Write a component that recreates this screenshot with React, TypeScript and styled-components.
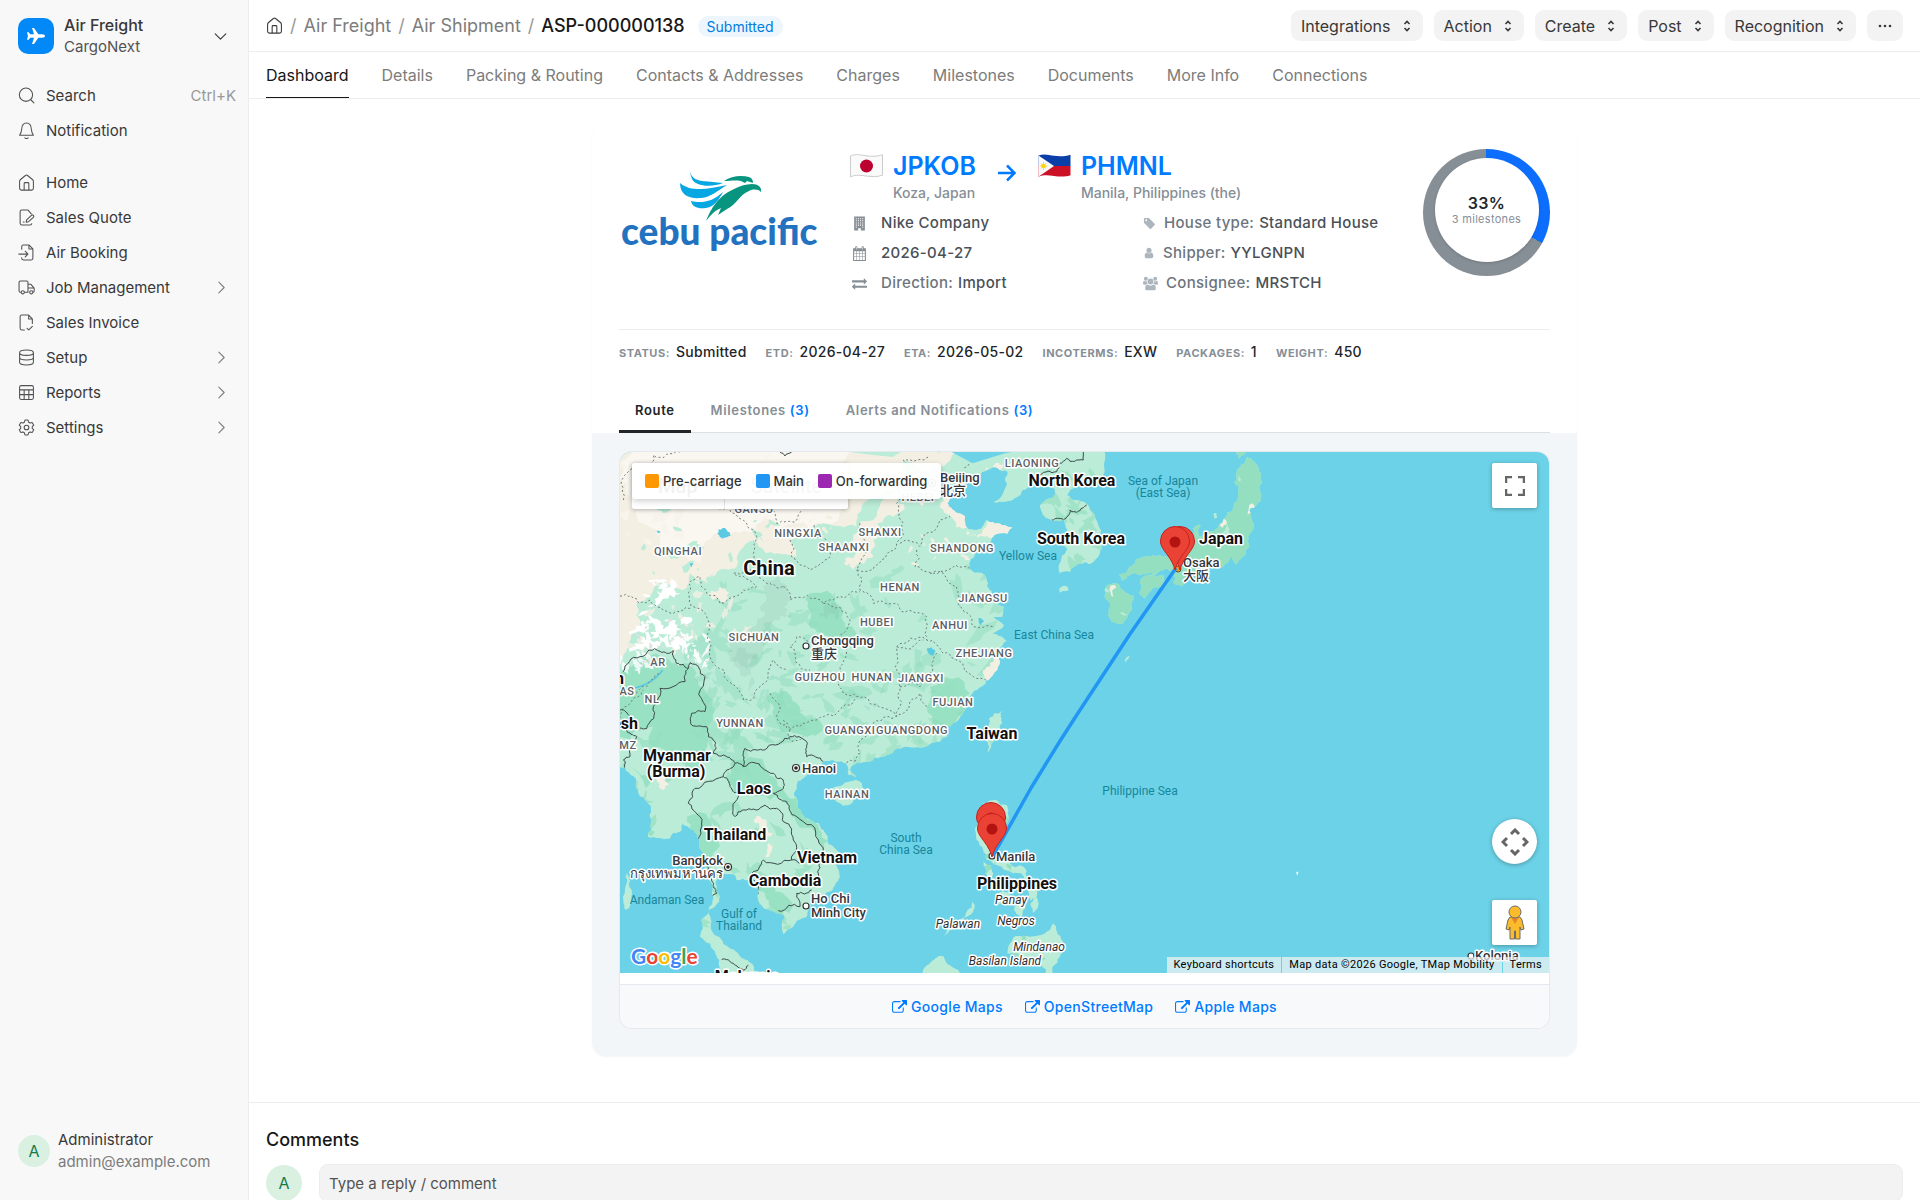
import React from "react";
import styled, { createGlobalStyle, css } from "styled-components";

/* ------------------------------------------------------------------ theme */

const INTER = `Inter, "Liberation Sans", "Noto Sans CJK SC", sans-serif`;
const ROBOTO = `Roboto, "Liberation Sans", "Noto Sans CJK SC", sans-serif`;

const GlobalStyle = createGlobalStyle`
  *, *::before, *::after { box-sizing: border-box; }
  body { margin: 0; background: #fff; color: #383838; font-family: ${INTER}; font-size: 15px; line-height: 20px; }
  button, input { font: inherit; letter-spacing: inherit; color: inherit; }
  button { border: 0; background: none; padding: 0; cursor: pointer; }
  a { color: inherit; text-decoration: none; }
  h2, p, ul, ol, dl, dd { margin: 0; padding: 0; }
  li { list-style: none; }
  svg { display: block; flex: none; }
`;

/* ------------------------------------------------------------------ shell */

const Shell = styled.div`
  display: grid;
  grid-template-columns: 249px minmax(0, 1fr);
  height: 100vh;
`;

const Sidebar = styled.aside`
  display: flex;
  flex-direction: column;
  background: #f8f8f8;
  border-right: 1px solid #ededed;
  min-height: 0;
`;

const AppSwitch = styled.button`
  display: flex;
  align-items: center;
  gap: 10px;
  padding: 14px 19px 14px 18px;
  text-align: left;
`;

const AppLogo = styled.span`
  display: grid;
  place-items: center;
  width: 36px;
  height: 36px;
  border-radius: 10px;
  background: #0289f7;
`;

const TwoLine = styled.span`
  display: flex;
  flex-direction: column;
  flex: 1;
  line-height: 22px;
`;

const Strong = styled.span`
  font-size: 16px;
  font-weight: 500;
`;

const Muted = styled.span<{ $light?: boolean }>`
  font-size: 15px;
  color: ${(p) => (p.$light ? "#7c7c7c" : "#525252")};
`;

const Nav = styled.ul`
  padding-top: 6px;
  & + & { padding-top: 17px; }
`;

const NavLink = styled.a`
  display: flex;
  align-items: center;
  gap: 11px;
  height: 35px;
  padding: 0 18px;
  color: #383838;
`;

const NavText = styled.span`
  flex: 1;
`;

const Shortcut = styled.kbd`
  font: inherit;
  color: #999;
  margin-right: -6px;
`;

const UserBox = styled.div`
  display: flex;
  align-items: center;
  gap: 8px;
  margin-top: auto;
  padding: 0 18px 27px;
`;

const Avatar = styled.span<{ $size: number }>`
  display: grid;
  place-items: center;
  flex: none;
  width: ${(p) => p.$size}px;
  height: ${(p) => p.$size}px;
  border-radius: 50%;
  background: #daf0e1;
  color: #137a4b;
  font-size: 16px;
`;

const Main = styled.main`
  min-width: 0;
  overflow-y: auto;
  scrollbar-width: none;
`;

/* ---------------------------------------------------------------- top bar */

const TopBar = styled.header`
  display: flex;
  align-items: center;
  justify-content: space-between;
  height: 52px;
  padding: 0 17px;
  border-bottom: 1px solid #ededed;
`;

const Crumbs = styled.ol`
  display: flex;
  align-items: center;
  gap: 7px;
  font-size: 18px;
  color: #7c7c7c;
`;

const Crumb = styled.li<{ $current?: boolean }>`
  display: flex;
  align-items: center;
  gap: 7px;
  color: ${(p) => (p.$current ? "#171717" : "#7c7c7c")};
  font-weight: ${(p) => (p.$current ? 500 : 400)};
  &:not(:first-child)::before {
    content: "/";
    color: #999;
    font-weight: 400;
  }
`;

const Pill = styled.span`
  margin-left: 6px;
  padding: 2px 9px;
  border-radius: 12px;
  background: #edf6fd;
  color: #007be0;
  font-size: 14px;
  line-height: 19px;
`;

const Actions = styled.div`
  display: flex;
  gap: 11px;
`;

const ActionButton = styled.button`
  display: flex;
  align-items: center;
  gap: 10px;
  height: 31px;
  padding: 0 10px;
  border-radius: 9px;
  background: #f3f3f3;
  color: #383838;
  font-size: 16px;
`;

const FormTabs = styled.nav`
  display: flex;
  gap: 33px;
  padding: 0 17px;
  border-bottom: 1px solid #ededed;
  font-size: 16px;
`;

const FormTab = styled.a<{ $active?: boolean }>`
  padding: 13px 0 12px;
  border-bottom: 1px solid ${(p) => (p.$active ? "#171717" : "transparent")};
  color: ${(p) => (p.$active ? "#171717" : "#7c7c7c")};
`;

/* ---------------------------------------------------------- shipment card */

const Card = styled.section`
  max-width: 985px;
  margin: 25px auto 46px;
  border-radius: 14px;
  background: #f3f6f9;
  overflow: hidden;
  box-shadow: 0 1px 2px rgba(0, 0, 0, 0.04);
  letter-spacing: 0.02em;
`;

const CardHead = styled.div`
  padding: 25px 27px 0;
  background: #fff;
`;

const Summary = styled.div`
  display: flex;
  align-items: flex-start;
  height: 180px;
`;

const LogoBox = styled.div`
  width: 204px;
  padding-top: 18px;
  margin-right: 27px;
`;

const Details = styled.div`
  flex: 1;
`;

const Route = styled.div`
  display: flex;
  gap: 21px;
`;

const Port = styled.div`
  display: grid;
  grid-template-columns: 33px auto;
  column-gap: 10px;
  align-items: center;
`;

const PortCode = styled.a`
  color: #007bff;
  font-size: 25px;
  font-weight: 600;
  line-height: 34px;
  letter-spacing: 0;
`;

const PortPlace = styled.span`
  grid-column: 2;
  font-size: 14px;
  font-weight: 500;
  letter-spacing: 0;
  color: #868e96;
`;

const ArrowBox = styled.span`
  padding-top: 15px;
`;

const Facts = styled.dl`
  display: grid;
  grid-template-columns: 291px 1fr;
  row-gap: 10px;
  padding-top: 10px;
`;

const Fact = styled.div<{ $tight?: boolean }>`
  display: flex;
  align-items: center;
  gap: ${(p) => (p.$tight ? 8 : 14)}px;
  padding-left: 2px;
  font-weight: 500;
  color: ${(p) => (p.$tight ? "#adb5bd" : "#868e96")};
`;

const FactName = styled.dt`
  color: #6c757d;
`;

const FactText = styled.dd`
  color: #495057;
`;

const FactPair = styled.div`
  display: flex;
  gap: 5px;
`;

const Ring = styled.div`
  display: grid;
  justify-content: center;
  align-items: start;
  width: 127px;
  height: 127px;
  padding-top: 9px;
  border-radius: 50%;
`;

const RingCore = styled.div`
  display: flex;
  flex-direction: column;
  align-items: center;
  justify-content: center;
  width: 104px;
  height: 104px;
  border-radius: 50%;
  background: #fff;
  box-shadow: 0 1px 3px rgba(0, 0, 0, 0.15);
`;

const RingValue = styled.strong`
  font-size: 16px;
  font-weight: 600;
  line-height: 18px;
  color: #212529;
`;

const RingNote = styled.span`
  font-size: 11px;
  line-height: 14px;
  color: #868e96;
`;

const Meta = styled.dl`
  display: flex;
  gap: 19px;
  padding: 12px 0 30px;
  border-top: 1px solid #ededed;
`;

const MetaItem = styled.div`
  display: flex;
  align-items: baseline;
  gap: 6px;
`;

const MetaName = styled.dt`
  font-size: 11px;
  font-weight: 700;
  letter-spacing: 0.05em;
  text-transform: uppercase;
  color: #868e96;
`;

const MetaValue = styled.dd`
  font-size: 14px;
  font-weight: 500;
  color: #212529;
`;

const CardTabs = styled.div`
  display: flex;
  gap: 4px;
  border-bottom: 1px solid #d8e0e6;
`;

const CardTab = styled.button<{ $active?: boolean }>`
  padding: 7px 16px 10px;
  margin-bottom: -1px;
  border-bottom: 3px solid ${(p) => (p.$active ? "#212529" : "transparent")};
  color: ${(p) => (p.$active ? "#212529" : "#868e96")};
  font-size: 13px;
  font-weight: 600;
  letter-spacing: 0.05em;
`;

const Count = styled.span`
  color: #007bff;
`;

const CardBody = styled.div`
  padding: 19px 28px 28px;
`;

const MapCard = styled.div`
  border-radius: 12px;
  overflow: hidden;
  background: #fff;
  box-shadow: 0 0 0 1px #e3e9ee;
`;

const MapLinks = styled.div`
  display: flex;
  justify-content: center;
  gap: 22px;
  margin-top: 11px;
  padding: 12px 0 11px;
  border-top: 1px solid #e3e9ee;
  background: #f8f9fb;
`;

const MapLink = styled.a`
  display: flex;
  align-items: center;
  gap: 4px;
  color: #007bff;
  font-size: 14px;
  font-weight: 500;
`;

/* -------------------------------------------------------------------- map */

const MapFrame = styled.div`
  position: relative;
  height: 521px;
  font-family: ${ROBOTO};
`;

const MapSvg = styled.svg`
  width: 100%;
  height: 100%;
  background: #6cd2e7;
`;

const halo = css`
  paint-order: stroke;
  stroke: #fff;
  stroke-width: 3px;
  stroke-linejoin: round;
`;

type LabelKind = "country" | "big" | "province" | "city" | "island" | "sea";

const MapLabel = styled.text<{ $kind: LabelKind; $anchor?: string }>`
  font-family: ${ROBOTO};
  letter-spacing: 0;
  text-anchor: ${(p) => p.$anchor ?? "middle"};
  ${(p) =>
    ({
      country: css`font-size: 16px; font-weight: 700; fill: #111; ${halo}`,
      big: css`font-size: 20px; font-weight: 700; fill: #111; ${halo}`,
      province: css`font-size: 11px; font-weight: 500; fill: #5a5f66; letter-spacing: 0.05em; ${halo}`,
      city: css`font-size: 13px; font-weight: 500; fill: #33373b; ${halo}`,
      island: css`font-size: 12px; font-style: italic; fill: #2b2f33; ${halo}`,
      sea: css`font-size: 12px; fill: #17869b;`,
    })[p.$kind]}
`;

const GoogleMark = styled.text`
  font-family: Lato, ${ROBOTO};
  font-size: 21px;
  font-weight: 700;
  letter-spacing: 0;
  ${halo}
`;

const MapTypes = styled.div`
  position: absolute;
  left: 12px;
  top: 11px;
  display: flex;
  height: 46px;
  border-radius: 2px;
  background: #fff;
  box-shadow: 0 1px 4px rgba(0, 0, 0, 0.3);
`;

const MapType = styled.button<{ $on?: boolean }>`
  padding: 0 26px;
  font-size: 20px;
  font-weight: ${(p) => (p.$on ? 500 : 400)};
  color: ${(p) => (p.$on ? "#000" : "#565656")};
  letter-spacing: 0;
  & + & { border-left: 1px solid #e6e6e6; }
`;

const Legend = styled.ul`
  position: absolute;
  left: 12px;
  top: 11px;
  display: flex;
  align-items: center;
  gap: 14px;
  height: 36px;
  padding: 0 14px 0 13px;
  border-radius: 4px;
  background: rgba(255, 255, 255, 0.95);
  box-shadow: 0 2px 6px rgba(0, 0, 0, 0.2);
  font-family: ${INTER};
  font-size: 13px;
  font-weight: 500;
  letter-spacing: 0;
  color: #333;
`;

const LegendItem = styled.li<{ $color: string }>`
  display: flex;
  align-items: center;
  gap: 4px;
  &::before {
    content: "";
    width: 14px;
    height: 14px;
    border-radius: 2px;
    background: ${(p) => p.$color};
  }
`;

const MapControl = styled.button<{ $round?: boolean }>`
  display: grid;
  place-items: center;
  width: 45px;
  height: 45px;
  border-radius: ${(p) => (p.$round ? "50%" : "2px")};
  background: #fff;
  box-shadow: 0 1px 4px rgba(0, 0, 0, 0.3);
`;

const MapControls = styled.div`
  position: absolute;
  top: 11px;
  right: 12px;
  bottom: 28px;
  display: flex;
  flex-direction: column;
  gap: 36px;
  & > :first-child { margin-bottom: auto; }
`;

const Attribution = styled.div`
  position: absolute;
  right: 0;
  bottom: 0;
  display: flex;
  gap: 1px;
  font-size: 11px;
  line-height: 16px;
  color: #000;
`;

const Credit = styled.a`
  padding: 0 7px;
  background: rgba(245, 245, 245, 0.7);
`;

const VIEW_BOX = "1 0 929 521";

/* Geography is digitised on a 3x grid; this group transform brings it to map units. */
const GRID = "translate(-9 -12) scale(0.33333)";

type Pt = [number, number];

function rng(seed: number) {
  let s = seed;
  return () => {
    s = (s * 16807) % 2147483647;
    return s / 2147483647;
  };
}

const parse = (src: string): Pt[] =>
  src
    .trim()
    .split(/\s+/)
    .map((p) => p.split(",").map(Number) as Pt);

/* Midpoint displacement: turns a coarse outline into a natural-looking one. */
function rough(src: string, closed = true, amp = 0.16, seed = 7): string {
  const r = rng(seed * 131 + 17);
  let pts = parse(src);
  for (let k = 0; k < 3; k++) {
    const out: Pt[] = [];
    const n = pts.length;
    for (let i = 0; i < (closed ? n : n - 1); i++) {
      const a = pts[i];
      const b = pts[(i + 1) % n];
      const d = (r() - 0.5) * 2 * amp;
      const far = Math.hypot(b[0] - a[0], b[1] - a[1]) > 8;
      out.push(a);
      if (far) out.push([(a[0] + b[0]) / 2 - (b[1] - a[1]) * d, (a[1] + b[1]) / 2 + (b[0] - a[0]) * d]);
    }
    if (!closed) out.push(pts[n - 1]);
    pts = out;
  }
  return "M" + pts.map((p) => `${Math.round(p[0])} ${Math.round(p[1])}`).join("L") + (closed ? "Z" : "");
}

function patches(count: number, box: [number, number, number, number], size: number, seed: number): string {
  const r = rng(seed);
  let d = "";
  for (let i = 0; i < count; i++) {
    const cx = box[0] + r() * (box[2] - box[0]);
    const cy = box[1] + r() * (box[3] - box[1]);
    const s = size * (0.3 + r());
    const tilt = r() * 3;
    const pts: string[] = [];
    for (let k = 0; k < 11; k++) {
      const a = (k / 11) * Math.PI * 2;
      const q = s * (0.35 + r() * 0.9);
      const x = Math.cos(a) * q * 1.5;
      const y = Math.sin(a) * q * 0.6;
      pts.push(`${Math.round(cx + x * Math.cos(tilt) - y * Math.sin(tilt))} ${Math.round(cy + x * Math.sin(tilt) + y * Math.cos(tilt))}`);
    }
    d += "M" + pts.join("L") + "Z";
  }
  return d;
}

const MAINLAND =
  "-30,-20 700,-40 1485,0 1485,60 1478,120 1440,132 1400,140 1372,165 1385,178 1420,185 1440,210 1462,245 1472,300 1468,345 1440,372 1405,372 1380,395 1348,402 1352,365 1372,330 1355,305 1372,270 1362,238 1320,238 1295,215 1290,195 1330,172 1335,148 1310,138 1262,142 1220,172 1150,186 1188,140 1192,95 1150,82 1118,95 1095,132 1030,150 1012,190 1040,218 1065,228 1070,262 1100,270 1128,240 1165,250 1208,262 1192,282 1150,290 1120,322 1082,358 1076,382 1120,402 1132,440 1150,480 1182,502 1178,530 1150,532 1182,556 1148,582 1190,602 1168,630 1170,662 1128,724 1092,752 1078,792 1050,832 1008,862 1012,890 985,905 900,922 830,946 760,966 728,976 720,990 738,1012 715,1004 708,970 680,965 640,966 590,1005 562,1025 552,1060 562,1100 602,1140 640,1170 690,1240 690,1312 668,1350 602,1390 590,1430 550,1460 520,1482 524,1430 500,1420 450,1392 446,1352 420,1322 380,1320 368,1302 345,1302 320,1320 330,1370 294,1412 302,1462 340,1512 380,1536 412,1560 450,1620 352,1620 328,1560 300,1510 270,1490 274,1440 298,1400 308,1350 290,1300 272,1230 268,1200 250,1170 218,1150 214,1172 178,1196 114,1190 124,1140 104,1080 84,1050 58,1000 20,976 -400,976 -400,-20";

const ISLANDS = [
  "1175,812 1152,820 1136,858 1124,900 1136,945 1150,905 1176,850",
  "722,1024 756,1030 750,1066 715,1096 680,1086 664,1052",
  "1910,52 1930,64 1956,125 1954,168 1918,210 1914,290 1908,340 1880,372 1865,345 1850,370 1820,385 1760,386 1730,420 1715,440 1690,425 1685,392 1660,390 1610,402 1570,400 1535,422 1528,402 1600,350 1650,346 1690,346 1740,330 1750,266 1772,255 1765,290 1810,275 1840,238 1870,205 1886,140 1872,126 1890,80",
  "1878,20 1908,20 1904,42 1886,56",
  "1590,430 1620,404 1660,405 1666,430 1625,450 1606,476 1588,460",
  "1484,450 1510,430 1540,450 1568,465 1565,500 1540,548 1505,545 1500,500 1486,475",
  "1120,1090 1190,1096 1196,1130 1182,1180 1162,1240 1200,1270 1240,1280 1252,1312 1210,1300 1150,1272 1130,1260 1100,1200 1105,1130",
  "1120,1262 1150,1300 1142,1322 1126,1300",
  "1240,1300 1280,1370 1262,1384 1246,1344",
  "1160,1362 1200,1356 1190,1392 1162,1390",
  "1238,1376 1232,1432 1212,1410 1216,1386",
  "1270,1362 1284,1400 1270,1420 1262,1390",
  "1088,1384 1086,1420 1046,1450 1000,1492 1036,1440 1070,1416",
  "1200,1510 1260,1490 1330,1450 1352,1490 1350,1550 1318,1620 1290,1560 1240,1550 1192,1540",
  "940,1620 970,1560 1000,1548 1012,1572 1066,1620",
  "1348,446 1372,440 1376,450 1350,458",
  "1544,660 1560,650 1548,668",
  "1810,222 1820,220 1822,232 1814,236",
  "50,1300 56,1330 46,1410 40,1380",
].map((s, i) => rough(s, true, 0.2, i + 3));

const JAPAN = ISLANDS.slice(2, 6).join("");
const LAND = rough(MAINLAND) + ISLANDS.join("");

const ARID = rough(
  "-300,-100 500,-60 1060,20 1000,80 940,92 880,64 850,150 760,190 740,260 640,250 600,280 540,300 560,350 470,340 430,300 380,380 330,390 290,430 240,400 216,450 150,420 120,470 80,490 90,560 30,660 -300,660",
  true,
  0.2,
  11,
);
const PALE = rough("70,36 720,36 640,120 700,200 560,250 460,230 360,280 250,330 150,300 60,200", true, 0.3, 5);
const CREAM_SPOTS = [
  "860,150 850,230 790,300 790,350 730,390 700,370 740,340 730,300 790,240",
  "1040,150 1070,220 1090,262 1060,268 1000,216 990,200",
  "1130,240 1208,262 1150,290 1100,290",
  "330,440 350,490 310,480 295,460",
  "430,1140 470,1150 490,1180 440,1200",
  "140,980 165,1010 160,1050 130,1000",
  "480,1210 486,1230 466,1250",
  "1170,655 1130,722 1118,700 1140,670",
  "1150,86 1180,70 1150,150 1110,140",
  "1508,436 1518,440 1510,470 1498,450",
  "1845,238 1840,262 1828,250",
  "1925,190 1930,210 1914,226",
].map((s, i) => rough(s, true, 0.35, i + 20));
const DEEP = [
  "-100,700 30,700 100,660 200,670 260,700 290,760 290,860 240,1000 180,960 130,860 60,900 -100,850",
  "480,760 560,790 640,860 560,880 500,850",
  "600,460 700,520 740,580 660,600 600,540",
  "960,740 1080,760 1040,840 960,860",
  "360,970 470,990 520,1050 590,1140 660,1200 640,1230 560,1150 480,1080 400,1060",
  "230,1130 300,1140 320,1230 280,1290 240,1180",
  "60,980 110,1060 140,1180 110,1180",
  "440,1350 520,1360 540,1420 480,1400",
].map((s, i) => rough(s, true, 0.3, i + 40));
const RELIEF = [
  "470,420 520,430 520,500 560,530 480,560 460,640 410,690 350,640 430,560 450,500",
  "640,500 690,510 680,540 630,530",
  "380,640 430,640 440,780 420,760 390,690",
].map((s, i) => rough(s, true, 0.4, i + 60));

const PROVINCES = [
  "30,468 90,490 120,480 190,520 240,505 236,430 270,410 290,460 330,490 400,450 440,440 370,400 440,400 480,430 520,440",
  "40,180 60,90 130,45 210,36",
  "220,140 300,190 400,240 440,290 430,340 440,400",
  "460,190 500,250 560,240 580,170 650,200",
  "540,300 545,350 600,390 660,350 670,310 620,290 610,250",
  "750,250 740,390 800,375 860,310 880,250 860,190 880,60 960,50",
  "740,390 750,450 790,490 860,490 920,520 950,530 950,600",
  "870,310 930,320 990,240 1020,230",
  "920,330 915,380 970,400 1060,380 1080,385",
  "960,400 1000,400 1040,440 1050,500 1090,560 1150,560",
  "520,440 540,480 640,490 720,460 750,455",
  "640,490 720,540 700,580 640,610 560,590 540,620 600,690",
  "250,500 300,560 300,650 380,740 400,780 450,740 490,660 530,690",
  "700,600 690,680 700,760 760,770 860,830 870,740 860,620 940,600",
  "480,760 510,850 570,860 640,830 740,770",
  "860,620 950,600 1000,640 1060,680 1090,710 1130,724",
  "870,740 930,740 960,700 980,640",
  "950,800 930,760 880,820 830,830 780,870 750,940 710,970",
  "520,840 540,900 580,890",
  "1080,36 1060,90",
  "80,760 110,740 150,700",
  "30,860 60,790 100,750",
].map((s, i) => rough(s, false, 0.22, i + 80));
const FRONTIERS = [
  "40,695 90,650 150,634 190,632 200,670 235,685 225,725 150,745 130,800 110,866 90,864",
  "235,685 240,668 285,710 285,815 245,820 250,858 290,860 295,890 315,905 310,940 350,950 375,970 350,990 340,1010 255,1045 235,1090 275,1160 270,1240 290,1300 305,1322 320,1360 280,1430",
  "375,970 400,980 405,925 440,930 480,915 540,890 590,905 590,950 640,965",
  "400,980 440,970 490,1000 520,1020 515,1050 490,1060 530,1085 560,1130 625,1200 628,1270 622,1320",
  "340,1010 360,1040 385,1060 375,1130 400,1110 440,1110 465,1095 500,1105 520,1145 550,1200 545,1260 460,1260 425,1300 445,1362",
  "545,1260 570,1270",
  "605,1350 560,1360 570,1400 505,1412",
  "335,1558 370,1570 400,1590 415,1576",
  "1325,240 1360,240 1380,210 1410,212 1430,195",
  "1290,105 1340,95 1370,55 1420,60 1420,36",
  "510,36 525,48 545,36",
  "30,810 60,830 50,870 80,890 60,950 40,960 40,1000",
].map((s, i) => rough(s, false, 0.2, i + 120));
const LAKES = ["325,268 350,270 362,288 330,292", "950,625 975,630 970,648 955,640", "1105,535 1122,545 1112,556", "240,370 252,372 246,382", "140,272 152,276 146,280"].map((s, i) =>
  rough(s, true, 0.3, i + 160),
);

type Label = [LabelKind, number, number, string, string?];

const LABELS: Label[] = [
  ["province", 413, 15, "LIAONING"],
  ["province", 299, 49, "HEBEI"],
  ["province", 135, 61, "GANSU"],
  ["province", 179, 85, "NINGXIA"],
  ["province", 261, 84, "SHANXI"],
  ["province", 225, 99, "SHAANXI"],
  ["province", 59, 103, "QINGHAI"],
  ["province", 343, 100, "SHANDONG"],
  ["province", 281, 139, "HENAN"],
  ["province", 364, 150, "JIANGSU"],
  ["province", 258, 174, "HUBEI"],
  ["province", 331, 177, "ANHUI"],
  ["province", 135, 189, "SICHUAN"],
  ["province", 365, 205, "ZHEJIANG"],
  ["province", 201, 229, "GUIZHOU"],
  ["province", 253, 229, "HUNAN"],
  ["province", 302, 230, "JIANGXI"],
  ["province", 39, 214, "AR"],
  ["province", 8, 243, "AS"],
  ["province", 33, 251, "NL"],
  ["province", 9, 297, "MZ"],
  ["province", 334, 254, "FUJIAN"],
  ["province", 121, 275, "YUNNAN"],
  ["province", 231, 282, "GUANGXI"],
  ["province", 293, 282, "GUANGDONG"],
  ["province", 228, 346, "HAINAN"],
  ["sea", 544, 33, "Sea of Japan"],
  ["sea", 544, 45, "(East Sea)"],
  ["sea", 409, 108, "Yellow Sea"],
  ["sea", 435, 187, "East China Sea"],
  ["sea", 287, 390, "South"],
  ["sea", 287, 402, "China Sea"],
  ["sea", 48, 452, "Andaman Sea"],
  ["sea", 120, 466, "Gulf of"],
  ["sea", 120, 478, "Thailand"],
  ["sea", 521, 343, "Philippine Sea"],
  ["country", 453, 34, "North Korea"],
  ["country", 462, 92, "South Korea"],
  ["country", 602, 92, "Japan"],
  ["big", 150, 123, "China"],
  ["country", 373, 287, "Taiwan"],
  ["country", 5, 232, "Bhutan", "end"],
  ["country", 19, 277, "Bangladesh", "end"],
  ["country", 58, 309, "Myanmar"],
  ["country", 57, 325, "(Burma)"],
  ["country", 135, 342, "Laos"],
  ["country", 116, 388, "Thailand"],
  ["country", 208, 411, "Vietnam"],
  ["country", 166, 434, "Cambodia"],
  ["country", 398, 437, "Philippines"],
  ["country", 128, 530, "Malaysia"],
  ["city", 321, 30, "Beijing", "start"],
  ["city", 321, 43, "北京", "start"],
  ["city", 192, 193, "Chongqing", "start"],
  ["city", 192, 206, "重庆", "start"],
  ["city", 183, 321, "Hanoi", "start"],
  ["city", 104, 413, "Bangkok", "end"],
  ["city", 104, 426, "กรุงเทพมหานคร", "end"],
  ["city", 192, 451, "Ho Chi", "start"],
  ["city", 192, 465, "Minh City", "start"],
  ["city", 377, 409, "Manila", "start"],
  ["city", 564, 115, "Osaka", "start"],
  ["city", 564, 128, "大阪", "start"],
  ["city", 856, 508, "Kolonia", "start"],
  ["island", 392, 452, "Panay"],
  ["island", 339, 476, "Palawan"],
  ["island", 397, 473, "Negros"],
  ["island", 420, 499, "Mindanao"],
  ["island", 386, 513, "Basilan Island"],
];

const Pin = ({ x, y }: { x: number; y: number }) => (
  <g transform={`translate(${x} ${y})`}>
    <path
      d="M0 0C-1.5-6-4-10-7.500-15C-11-20-14.500-23.500-14.500-29A14.500 14.500 0 0 1 14.500-29C14.500-23.500 11-20 7.500-15C4-10 1.500-6 0 0Z"
      fill="#ea4335"
      stroke="#c5221f"
      strokeWidth="1"
    />
    <circle cy="-28" r="5.500" fill="#b31412" />
  </g>
);

const Town = ({ x, y, capital }: { x: number; y: number; capital?: boolean }) => (
  <g>
    <circle cx={x} cy={y} r={capital ? 3.5 : 3} fill="#fff" stroke="#333" strokeWidth="1.2" />
    {capital && <circle cx={x} cy={y} r="1.800" fill="#222" />}
  </g>
);

const RouteMap = () => (
  <MapFrame>
    <MapSvg viewBox={VIEW_BOX} preserveAspectRatio="xMidYMid slice" role="img" aria-label="Route map from Kobe to Manila">
      <clipPath id="land">
        <path d={LAND} />
      </clipPath>
      <g transform={GRID}>
        <path d={LAND} fill="#bbecd8" />
        <path d={JAPAN} fill="#93dfc0" />
        <g clipPath="url(#land)">
          <path d={patches(90, [280, 380, 1180, 980], 34, 41)} fill="#a6e5cb" />
          <path d={patches(50, [30, 880, 700, 1500], 26, 97)} fill="#a0e3c7" />
          <path d={patches(30, [1290, 30, 1480, 400], 22, 53)} fill="#a0e3c7" />
          <path d={patches(34, [1480, 40, 1960, 560], 14, 77)} fill="#bbecd8" />
          <path d={patches(30, [1090, 1090, 1360, 1620], 18, 29)} fill="#94dfc0" />
          {DEEP.map((d, i) => (
            <path key={i} d={d} fill="#92dfbf" opacity="0.850" />
          ))}
          <path d={patches(40, [280, 640, 1080, 900], 22, 63)} fill="#8fdcbd" opacity="0.500" />
          <path d={ARID} fill="#f4efe3" />
          <path d={PALE} fill="#faf7f1" />
          <path d={patches(26, [30, 40, 560, 420], 24, 31)} fill="#f8f4ec" />
          <path d={patches(22, [60, 400, 420, 640], 16, 83)} fill="#f4efe3" opacity="0.800" />
          <path d={patches(24, [100, 180, 560, 470], 14, 19)} fill="#bbecd8" />
          <path d={patches(16, [100, 420, 190, 520], 16, 15)} fill="#fff" />
          <path d={patches(34, [90, 540, 230, 630], 18, 37)} fill="#fff" />
          <path d={patches(16, [30, 640, 120, 690], 12, 71)} fill="#fff" opacity="0.800" />
          <path d={patches(18, [220, 590, 300, 680], 12, 57)} fill="#fff" opacity="0.900" />
          <path d={patches(30, [80, 540, 300, 680], 7, 49)} fill="#dfe3e1" />
          {RELIEF.map((d, i) => (
            <path key={i} d={d} fill="#7faf9e" opacity="0.160" />
          ))}
          {CREAM_SPOTS.map((d, i) => (
            <path key={i} d={d} fill="#f4efe3" />
          ))}
          <path d={patches(26, [560, 160, 1120, 400], 9, 23)} fill="#f4efe3" />
          {LAKES.map((d, i) => (
            <path key={i} d={d} fill="#5cc9e2" />
          ))}
          <path d="M40 750C90 745 130 730 158 690" fill="none" stroke="#5cc9e2" strokeWidth="5" />
          {PROVINCES.map((d, i) => (
            <path key={i} d={d} fill="none" stroke="#6f7f7c" strokeWidth="3" strokeDasharray="6 7" />
          ))}
          {FRONTIERS.map((d, i) => (
            <path key={i} d={d} fill="none" stroke="#3d4a4a" strokeWidth="3" />
          ))}
        </g>
      </g>
      <path d="M677 421l2-1-1 3" stroke="#fff" fill="none" />
      <Town x={187} y={194} />
      <Town x={177} y={316} capital />
      <Town x={109} y={415} capital />
      <Town x={187} y={454} />
      <Town x={313} y={31} capital />
      <Town x={373} y={404} />
      <Town x={852} y={504} />
      <circle cx="559" cy="117" r="3" fill="#ff9800" stroke="#555" />
      {LABELS.map(([kind, x, y, text, anchor]) => (
        <MapLabel key={`${text}${x}-${y}`} $kind={kind} $anchor={anchor} x={x} y={y}>
          {text}
        </MapLabel>
      ))}
      <path d="M557 116L511 182L461 258L441 289L412 336L389 377L374 404" fill="none" stroke="#2196f3" strokeWidth="3.500" strokeLinejoin="round" />
      <Pin x={561} y={118} />
      <Pin x={556} y={118} />
      <Pin x={372} y={394} />
      <Pin x={373} y={405} />
      <GoogleMark x="12" y="512">
        <tspan fill="#4285f4">G</tspan>
        <tspan fill="#ea4335">o</tspan>
        <tspan fill="#fbbc04">o</tspan>
        <tspan fill="#4285f4">g</tspan>
        <tspan fill="#34a853">l</tspan>
        <tspan fill="#ea4335">e</tspan>
      </GoogleMark>
    </MapSvg>
    <MapTypes>
      <MapType $on>Map</MapType>
      <MapType>Satellite</MapType>
    </MapTypes>
    <Legend>
      <LegendItem $color="#ff9800">Pre-carriage</LegendItem>
      <LegendItem $color="#2196f3">Main</LegendItem>
      <LegendItem $color="#9c27b0">On-forwarding</LegendItem>
    </Legend>
    <MapControls>
      <MapControl aria-label="Toggle fullscreen view">
        <svg width="20" height="20" viewBox="0 0 20 20" fill="none" stroke="#666" strokeWidth="2.500">
          <path d="M1 7V1h6M13 1h6v6M19 13v6h-6M7 19H1v-6" />
        </svg>
      </MapControl>
      <MapControl $round aria-label="Map camera controls">
        <svg width="28" height="28" viewBox="0 0 28 28" fill="none" stroke="#666" strokeWidth="3">
          <path d="M10 6l4-4 4 4M22 10l4 4-4 4M18 22l-4 4-4-4M6 18l-4-4 4-4" />
        </svg>
      </MapControl>
      <MapControl aria-label="Drag Pegman onto the map">
        <svg width="20" height="36" viewBox="0 0 20 36">
          <path d="M5 12h10l2 3 2 9-3 1-1-3v12h-4.500V26h-1v8H5V22l-1 3-3-1 2-9Z" fill="#fbbc2c" stroke="#6b6b6b" />
          <path d="M6 12h8l-4 7Z" fill="#e8832e" />
          <circle cx="10" cy="7" r="6" fill="#fbbc2c" stroke="#6b6b6b" />
        </svg>
      </MapControl>
    </MapControls>
    <Attribution>
      <Credit href="#keys">Keyboard shortcuts</Credit>
      <Credit as="span">Map data ©2026 Google, TMap Mobility</Credit>
      <Credit href="#terms">Terms</Credit>
    </Attribution>
  </MapFrame>
);

/* --------------------------------------------------------------- comments */

const Comments = styled.section`
  border-top: 1px solid #ededed;
  padding: 24px 17px 40px;
`;

const CommentsTitle = styled.h2`
  font-size: 18px;
  font-weight: 500;
  line-height: 26px;
  color: #171717;
`;

const Reply = styled.label`
  display: flex;
  align-items: center;
  gap: 17px;
  margin-top: 11px;
`;

const ReplyInput = styled.input`
  flex: 1;
  height: 38px;
  padding: 0 9px;
  border: 1px solid #ededed;
  border-radius: 9px;
  background: #f3f3f3;
  &::placeholder { color: #525252; opacity: 1; }
`;

/* ------------------------------------------------------------------ icons */

const LINE_ICONS: Record<string, React.ReactNode> = {
  search: <path d="M7.500 1a6 6 0 1 1 0 12.500 6 6 0 0 1 0-12.500ZM12 12l3 3" />,
  bell: <path d="M1.500 12.500h13c-1-1.500-1.700-3-1.900-5.500C12.400 3 11 1 8 1S3.600 3 3.400 7c-.2 2.500-.9 4-1.900 5.500ZM6.500 15c.8.700 2.200.7 3 0" />,
  home: <path d="M1.500 7c0-.8.3-1.300.9-1.800L7 1.400c.6-.5 1.400-.5 2 0l4.600 3.800c.6.500.9 1 .9 1.800v6.500c0 1-.6 1.700-1.700 1.700H3.200c-1.100 0-1.700-.7-1.700-1.700ZM5.800 15V9c0-.6.300-.9.9-.9h2.600c.6 0 .9.300.9.900v6" />,
  quote: <path d="M12.500 4.500 9.500 1H3.500C2.500 1 2 1.600 2 2.500v11c0 .9.500 1.500 1.500 1.500h8c.8 0 1.300-.3 1.500-1.200M5 12.300h.8M7.700 12.400l.4-2.200 4.500-4.300c1.100-1 3 .7 1.900 1.900l-4.600 4.100Z" />,
  booking: <path d="M3.500 5V2.500C3.500 1.600 4 1 5 1h5.500L14 4.500v9c0 .9-.5 1.500-1.500 1.500H5c-1 0-1.500-.6-1.500-1.500V13M10.300 1.200v3.500H14M.8 9.500h8.400M6.800 6.800l2.500 2.700-2.500 2.700" />,
  truck: <path d="M3 12.500h-.8c-.7 0-1.200-.5-1.200-1.200V3c0-.7.500-1.200 1.200-1.200h6c.7 0 1.200.5 1.200 1.200v9.500H6M9.500 5h2.700l3 3.500v3c0 .6-.4 1-1 1M9.500 8.500H15M4.500 11a1.500 1.500 0 1 1 0 3 1.500 1.500 0 0 1 0-3ZM12.500 11a1.500 1.500 0 1 1 0 3 1.500 1.500 0 0 1 0-3Z" />,
  invoice: <path d="M6 15H3.500C2.500 15 2 14.400 2 13.500v-11C2 1.600 2.500 1 3.500 1H10l3.500 3.500V9M10 1.200v3.500h3.500M8.500 13.500l1.700 1.500 3.300-3.300" />,
  database: <path d="M1.500 3.500C1.500 2 4 1 8 1s6.500 1 6.500 2.500S12 6 8 6 1.500 5 1.500 3.500ZM1.500 3.500v9C1.500 14 4 15 8 15s6.500-1 6.500-2.500v-9M1.500 8c0 1.500 2.500 2.300 6.500 2.300s6.500-.8 6.500-2.300" />,
  table: <path d="M3 1.500h10c1 0 1.500.5 1.500 1.500v10c0 1-.5 1.500-1.500 1.500H3c-1 0-1.500-.5-1.500-1.500V3c0-1 .5-1.500 1.500-1.500ZM1.500 5.500h13M1.500 10h13M5.800 5.500v9M10.200 5.500v9" />,
  gear: <path d="M6.600 1h2.800l.6 2 1.300.8 2-.5 1.500 2.400-1.400 1.500v1.600l1.400 1.500-1.500 2.400-2-.5-1.300.8-.6 2H6.600l-.6-2-1.300-.8-2 .5-1.500-2.400 1.400-1.500V7.200L1.200 5.700l1.500-2.400 2 .5L6 3ZM8 5.800a2.200 2.200 0 1 1 0 4.400 2.200 2.200 0 0 1 0-4.400Z" />,
  right: <path d="M5.500 3l5 5-5 5" />,
  down: <path d="M3 5.500l5 5 5-5" />,
};

const LineIcon = ({ name, color = "#525252" }: { name: string; color?: string }) => (
  <svg width="17" height="17" viewBox="0 0 16 16" fill="none" stroke={color} strokeLinecap="round" strokeLinejoin="round" aria-hidden>
    {LINE_ICONS[name]}
  </svg>
);

const SortIcon = () => (
  <svg width="12" height="14" viewBox="0 0 12 14" fill="none" stroke="#383838" strokeWidth="1.600" aria-hidden>
    <path d="M3.500 5L6 2.500 8.500 5M3.500 9L6 11.500 8.500 9" />
  </svg>
);

const SOLID_ICONS: Record<string, React.ReactNode> = {
  building: (
    <path fillRule="evenodd" d="M256 64h1280v1664h-480v-256h-320v256H256ZM448 256v128h128V256Zm256 0v128h128V256Zm256 0v128h128V256Zm256 0v128h128V256ZM448 512v128h128V512Zm256 0v128h128V512Zm256 0v128h128V512Zm256 0v128h128V512ZM448 768v128h128V768Zm256 0v128h128V768Zm256 0v128h128V768Zm256 0v128h128V768ZM448 1024v128h128v-128Zm256 0v128h128v-128Zm256 0v128h128v-128Zm256 0v128h128v-128ZM448 1280v128h128v-128Zm768 0v128h128v-128Z" />
  ),
  calendar: (
    <path fillRule="evenodd" d="M128 256h256V128q0-96 96-96h64q96 0 96 96v128h512V128q0-96 96-96h64q96 0 96 96v128h256v1536H128ZM480 128v288h64V128Zm768 0v288h64V128ZM256 640v256h256V640Zm320 0v256h288V640Zm352 0v256h288V640Zm352 0v256h256V640ZM256 960v288h256V960Zm320 0v288h288V960Zm352 0v288h288V960Zm352 0v288h256V960ZM256 1312v352h256v-352Zm320 0v352h288v-352Zm352 0v352h288v-352Zm352 0v352h256v-352Z" />
  ),
  exchange: (
    <path d="M1792 1184v192q0 13-9.500 22.500t-22.500 9.500h-1376v192q0 13-9.500 22.500t-22.500 9.500q-12 0-24-10l-319-320q-9-9-9-22 0-14 9-23l320-320q9-9 23-9 13 0 22.500 9.500t9.500 22.500v192h1376q13 0 22.500 9.500t9.500 22.500zm0-544q0 14-9 23l-320 320q-9 9-23 9-13 0-22.500-9.500t-9.500-22.500v-192h-1376q-13 0-22.500-9.500t-9.500-22.500v-192q0-13 9.500-22.500t22.500-9.500h1376v-192q0-14 9-23t23-9q12 0 24 10l319 319q9 9 9 23z" />
  ),
  tag: (
    <path d="M576 448q0-53-37.500-90.500t-90.500-37.500-90.500 37.500-37.500 90.500 37.500 90.500 90.500 37.500 90.500-37.500 37.500-90.500zm1067 576q0 53-37 90l-491 492q-39 37-91 37-53 0-90-37l-715-716q-38-37-64.500-101t-26.500-117v-416q0-52 38-90t90-38h416q53 0 117 26.500t102 64.500l715 714q37 39 37 91z" />
  ),
  user: (
    <path d="M1536 1399q0 109-62.500 187t-150.500 78h-854q-88 0-150.500-78t-62.500-187q0-85 8.500-160.500t31.500-152 58.500-131 94-89 134.500-34.500q131 128 313 128t313-128q76 0 134.500 34.500t94 89 58.500 131 31.500 152 8.500 160.500zm-256-887q0 159-112.500 271.500t-271.500 112.500-271.500-112.500-112.500-271.500 112.500-271.500 271.500-112.500 271.500 112.500 112.500 271.500z" />
  ),
  users: (
    <>
      <circle cx="340" cy="340" r="240" />
      <circle cx="1452" cy="340" r="240" />
      <circle cx="896" cy="660" r="350" />
      <path d="M0 900q0-330 130-330 100 80 210 80 60 0 120-20 0 190 100 300-170 10-250 110H160Q0 1040 0 900Zm1792 0q0-330-130-330-100 80-210 80-60 0-120-20 0 190-100 300 170 10 250 110h150q160 0 160-140ZM260 1480q0-460 290-460 150 130 346 130t346-130q290 0 290 460 0 220-200 220H460q-200 0-200-220Z" />
    </>
  ),
  link: (
    <path d="M1408 928v320q0 119-84.500 203.500t-203.500 84.500h-832q-119 0-203.500-84.500t-84.500-203.500v-832q0-119 84.500-203.500t203.500-84.500h704q14 0 23 9t9 23v64q0 14-9 23t-23 9h-704q-66 0-113 47t-47 113v832q0 66 47 113t113 47h832q66 0 113-47t47-113v-320q0-14 9-23t23-9h64q14 0 23 9t9 23zm384-864v512q0 26-19 45t-45 19-45-19l-176-176-652 652q-10 10-23 10t-23-10l-114-114q-10-10-10-23t10-23l652-652-176-176q-19-19-19-45t19-45 45-19h512q26 0 45 19t19 45z" />
  ),
};

const SolidIcon = ({ name, size = 15 }: { name: string; size?: number }) => (
  <svg width={size} height={size} viewBox="0 0 1792 1792" fill="currentColor" aria-hidden>
    {SOLID_ICONS[name]}
  </svg>
);

const PlaneIcon = () => (
  <svg width="20" height="18" viewBox="0 0 20 18" fill="#fff" aria-hidden>
    <path d="M19 9c0-.9-1.300-1.700-3-1.700h-3.600L8 1H6l2 6.300H4.200L2.700 5.200H1L2 9l-1 3.800h1.700l1.500-2.100H8L6 17h2l4.400-6.300H16c1.700 0 3-.8 3-1.700Z" />
  </svg>
);

const JapanFlag = () => (
  <svg width="33" height="24" viewBox="0 0 33 24" aria-hidden>
    <path d="M.5 2C6-.5 11 1 16 1.800S27 2.500 32.500.8v20.400c-5.500 2-11 1.500-16.500.8S6 20.500.5 22.800Z" fill="#fafafa" stroke="#ccc" />
    <circle cx="16.500" cy="12" r="6.500" fill="#bc0030" />
  </svg>
);

const PhilippinesFlag = () => (
  <svg width="33" height="24" viewBox="0 0 33 24" aria-hidden>
    <path d="M.5 1.500C6-.5 11 1 16 1.800S27 2.500 32.500.8V12H.5Z" fill="#0b3fa8" />
    <path d="M.5 12h32v9.200c-5.500 2-11 1.500-16.500.8S6 20.500.5 22.800Z" fill="#cc1126" />
    <path d="M.5 1.500 16 12 .5 22.800Z" fill="#f8f8f8" />
    <circle cx="5.500" cy="12" r="2.200" fill="#fcd116" />
    <path d="M5.500 8v8M1.800 12h7.500M3 9.300l5 5.400M8 9.300l-5 5.400" stroke="#fcd116" strokeWidth=".8" />
  </svg>
);

const RightArrow = () => (
  <svg width="20" height="18" viewBox="0 0 20 18" fill="none" stroke="#007bff" strokeWidth="2.500" aria-hidden>
    <path d="M1 9h16M10 1.500L17.500 9 10 16.500" />
  </svg>
);

const LogoText = styled.text`
  font-family: Lato, "Open Sans", sans-serif;
  font-size: 37px;
  font-weight: 900;
  letter-spacing: 0;
  fill: #2372bf;
`;

const CarrierLogo = () => (
  <svg width="204" height="96" viewBox="0 0 204 96" role="img" aria-label="Cebu Pacific">
    <g fill="#06a7e2">
      <path d="M71 4c1 6 5 9 12 10 8 1 14 1 21 2-12 5-28 3-31-4-1-3-2-6-2-8Z" />
      <path d="M61 16c6 5 12 6 20 6s17-2 27-4c-10 6-16 12-26 13-12 1-21-3-21-15Z" />
      <path d="M72 34c8 2 14 1 20-1 5-2 8-5 12-8-4 7-8 15-17 16-8 1-14-1-15-7Z" />
    </g>
    <g fill="#07957f">
      <path d="M105 14c7-5 17-6 25-4 3 1 4 3 4 6l-6-2-2 2-4-2c-6-1-11 0-17 0Z" />
      <path d="M87 54c5-13 13-25 26-31 7-4 14-6 20-6 6 0 10 3 9 8-3-3-8-3-12-1-10 4-12 13-22 18-3 2-6 4-9 6l3-7c-7 3-11 8-15 13Z" />
    </g>
    <LogoText x="2" y="78">cebu pacific</LogoText>
  </svg>
);

/* ------------------------------------------------------------------- data */

const NAV = [
  { text: "Home", icon: "home" },
  { text: "Sales Quote", icon: "quote" },
  { text: "Air Booking", icon: "booking" },
  { text: "Job Management", icon: "truck", more: true },
  { text: "Sales Invoice", icon: "invoice" },
  { text: "Setup", icon: "database", more: true },
  { text: "Reports", icon: "table", more: true },
  { text: "Settings", icon: "gear", more: true },
];
const TABS = ["Dashboard", "Details", "Packing & Routing", "Contacts & Addresses", "Charges", "Milestones", "Documents", "More Info", "Connections"];
const MENUS = ["Integrations", "Action", "Create", "Post", "Recognition"];
const META = [
  ["Status:", "Submitted"],
  ["ETD:", "2026-04-27"],
  ["ETA:", "2026-05-02"],
  ["Incoterms:", "EXW"],
  ["Packages:", "1"],
  ["Weight:", "450"],
];
const FACTS: { icon: string; name?: string; text: string; tight?: boolean; size?: number }[] = [
  { icon: "building", text: "Nike Company" },
  { icon: "tag", name: "House type:", text: "Standard House", tight: true, size: 13 },
  { icon: "calendar", text: "2026-04-27" },
  { icon: "user", name: "Shipper:", text: "YYLGNPN", tight: true, size: 12 },
  { icon: "exchange", name: "Direction:", text: "Import" },
  { icon: "users", name: "Consignee:", text: "MRSTCH", tight: true, size: 15 },
];
const PROGRESS = 33;

export default function App() {
  return (
    <>
      <GlobalStyle />
      <Shell>
        <Sidebar>
          <AppSwitch>
            <AppLogo>
              <PlaneIcon />
            </AppLogo>
            <TwoLine>
              <Strong>Air Freight</Strong>
              <Muted>CargoNext</Muted>
            </TwoLine>
            <LineIcon name="down" color="#383838" />
          </AppSwitch>
          <Nav>
            <li>
              <NavLink href="#search">
                <LineIcon name="search" />
                <NavText>Search</NavText>
                <Shortcut>Ctrl+K</Shortcut>
              </NavLink>
            </li>
            <li>
              <NavLink href="#notification">
                <LineIcon name="bell" />
                <NavText>Notification</NavText>
              </NavLink>
            </li>
          </Nav>
          <Nav>
            {NAV.map((n) => (
              <li key={n.text}>
                <NavLink href={`#${n.icon}`}>
                  <LineIcon name={n.icon} />
                  <NavText>{n.text}</NavText>
                  {n.more && <LineIcon name="right" color="#7c7c7c" />}
                </NavLink>
              </li>
            ))}
          </Nav>
          <UserBox>
            <Avatar $size={32}>A</Avatar>
            <TwoLine>
              <span>Administrator</span>
              <Muted $light>admin@example.com</Muted>
            </TwoLine>
          </UserBox>
        </Sidebar>

        <Main>
          <TopBar>
            <Crumbs>
              <Crumb>
                <a href="#home" aria-label="Home">
                  <LineIcon name="home" color="#383838" />
                </a>
              </Crumb>
              <Crumb>
                <a href="#air-freight">Air Freight</a>
              </Crumb>
              <Crumb>
                <a href="#air-shipment">Air Shipment</a>
              </Crumb>
              <Crumb $current>ASP-000000138</Crumb>
              <li>
                <Pill>Submitted</Pill>
              </li>
            </Crumbs>
            <Actions>
              {MENUS.map((m) => (
                <ActionButton key={m}>
                  {m}
                  <SortIcon />
                </ActionButton>
              ))}
              <ActionButton aria-label="More">
                <svg width="16" height="16" viewBox="0 0 16 16" fill="#383838" aria-hidden>
                  <circle cx="3" cy="8" r="1.300" />
                  <circle cx="8" cy="8" r="1.300" />
                  <circle cx="13" cy="8" r="1.300" />
                </svg>
              </ActionButton>
            </Actions>
          </TopBar>
          <FormTabs>
            {TABS.map((t, i) => (
              <FormTab key={t} href="#tab" $active={i === 0}>
                {t}
              </FormTab>
            ))}
          </FormTabs>

          <Card>
            <CardHead>
              <Summary>
                <LogoBox>
                  <CarrierLogo />
                </LogoBox>
                <Details>
                  <Route>
                    <Port>
                      <JapanFlag />
                      <PortCode href="#JPKOB">JPKOB</PortCode>
                      <PortPlace>Koza, Japan</PortPlace>
                    </Port>
                    <ArrowBox>
                      <RightArrow />
                    </ArrowBox>
                    <Port>
                      <PhilippinesFlag />
                      <PortCode href="#PHMNL">PHMNL</PortCode>
                      <PortPlace>Manila, Philippines (the)</PortPlace>
                    </Port>
                  </Route>
                  <Facts>
                    {FACTS.map((f) => (
                      <Fact key={f.text} $tight={f.tight}>
                        <SolidIcon name={f.icon} size={f.size} />
                        <FactPair>
                          {f.name && <FactName>{f.name}</FactName>}
                          <FactText>{f.text}</FactText>
                        </FactPair>
                      </Fact>
                    ))}
                  </Facts>
                </Details>
                <Ring style={{ background: `conic-gradient(#0d6efd 0 ${PROGRESS}%, #868e96 ${PROGRESS}% 100%)` }}>
                  <RingCore>
                    <RingValue>{PROGRESS}%</RingValue>
                    <RingNote>3 milestones</RingNote>
                  </RingCore>
                </Ring>
              </Summary>
              <Meta>
                {META.map(([k, v]) => (
                  <MetaItem key={k}>
                    <MetaName>{k}</MetaName>
                    <MetaValue>{v}</MetaValue>
                  </MetaItem>
                ))}
              </Meta>
              <CardTabs>
                <CardTab $active>Route</CardTab>
                <CardTab>
                  Milestones <Count>(3)</Count>
                </CardTab>
                <CardTab>
                  Alerts and Notifications <Count>(3)</Count>
                </CardTab>
              </CardTabs>
            </CardHead>
            <CardBody>
              <MapCard>
                <RouteMap />
                <MapLinks>
                  {["Google Maps", "OpenStreetMap", "Apple Maps"].map((m) => (
                    <MapLink key={m} href="#map">
                      <SolidIcon name="link" />
                      {m}
                    </MapLink>
                  ))}
                </MapLinks>
              </MapCard>
            </CardBody>
          </Card>

          <Comments>
            <CommentsTitle>Comments</CommentsTitle>
            <Reply>
              <Avatar $size={36}>A</Avatar>
              <ReplyInput placeholder="Type a reply / comment" aria-label="Type a reply / comment" />
            </Reply>
          </Comments>
        </Main>
      </Shell>
    </>
  );
}
